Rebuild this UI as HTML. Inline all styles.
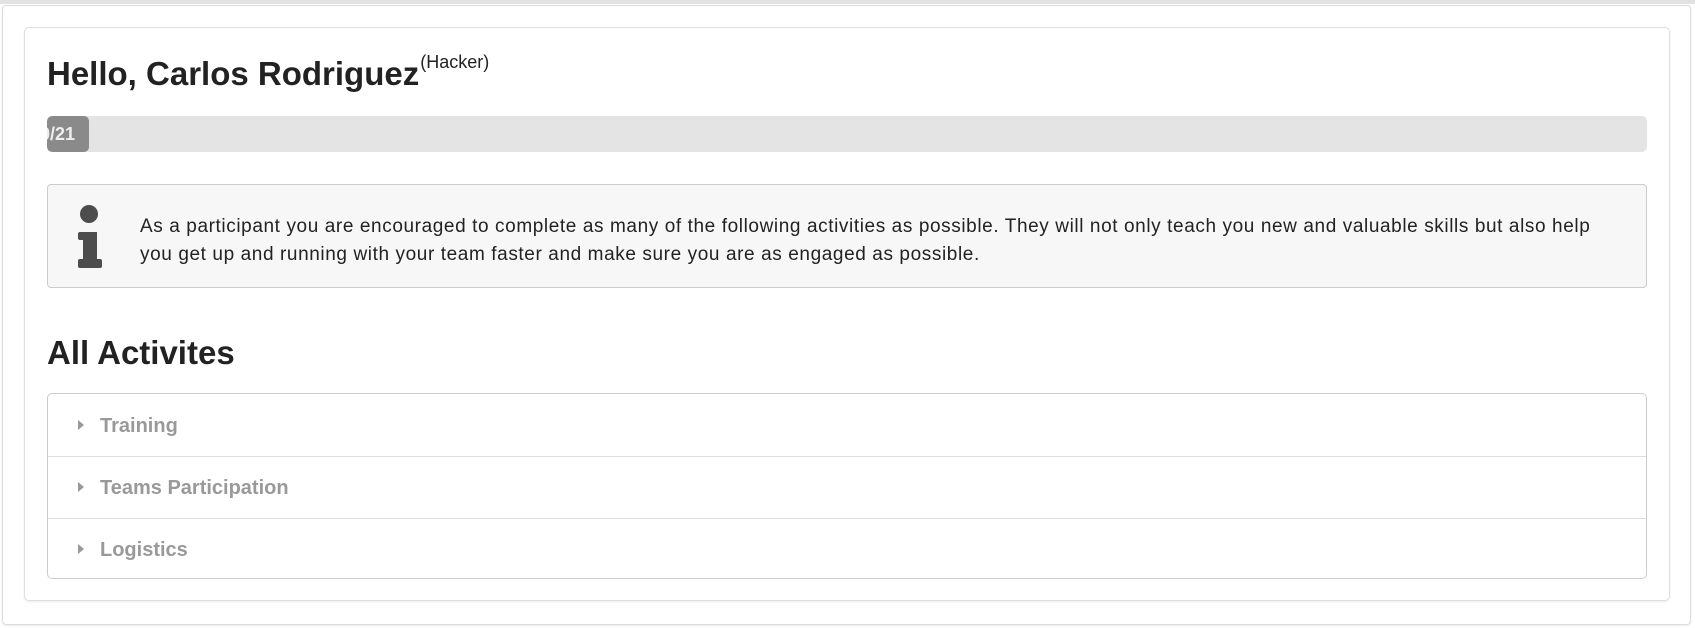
<!DOCTYPE html>
<html><head><meta charset="utf-8"><style>
html,body{margin:0;padding:0;width:1695px;height:628px;background:#fff;overflow:hidden;font-family:"Liberation Sans",sans-serif;position:relative}
.abs{position:absolute}
.topbar{left:0;top:0;width:1695px;height:4px;background:#e2e2e2}
.outer{left:2px;top:5px;width:1687px;height:618px;border:1px solid #dcdcdc;border-radius:4px;box-shadow:0 1px 2px rgba(0,0,0,.08)}
.inner{left:24px;top:27px;width:1644px;height:572px;border:1px solid #dedede;border-radius:5px;box-shadow:0 1px 2px rgba(0,0,0,.08)}
h1{margin:0;position:absolute;font-weight:bold;color:#222;font-size:33px;white-space:nowrap;line-height:1}
.sup{font-size:18px;font-weight:normal;position:relative;top:-17px;margin-left:1px}
.prog{left:47px;top:116px;width:1600px;height:36px;background:#e4e4e4;border-radius:5px;overflow:hidden}
.fill{left:0;top:0;width:42px;height:36px;background:#8a8a8a;border-radius:5px;overflow:hidden;color:#eee;font-weight:bold;font-size:18px;line-height:36px}
.fill span{position:absolute;left:-7px;top:0}
.info{left:47px;top:184px;width:1598px;height:102px;background:#f7f7f7;border:1px solid #ccc;border-radius:4px}
.txt{left:140px;top:213px;font-size:19px;color:#222;line-height:28px;white-space:nowrap;letter-spacing:0.6px}
.acc{left:47px;top:393px;width:1598px;height:184px;border:1px solid #ccc;border-radius:5px}
.row{left:0;width:1598px;height:1px;background:#ddd}
.it{left:52px;font-size:20px;font-weight:bold;color:#999;white-space:nowrap}
.arr{left:30px;width:0;height:0;border-top:5.5px solid transparent;border-bottom:5.5px solid transparent;border-left:6px solid #999}
</style></head><body>
<div class="abs topbar"></div>
<div class="abs outer"></div>
<div class="abs inner"></div>
<h1 style="left:47px;top:57px">Hello, Carlos Rodriguez<span class="sup">(Hacker)</span></h1>
<div class="abs prog"><div class="abs fill"><span>0/21</span></div></div>
<div class="abs info"></div>
<svg class="abs" style="left:70px;top:200px" width="40" height="72" viewBox="70 200 40 72">
<circle cx="89" cy="214" r="9" fill="#4d4d4d"/>
<path d="M80 232 H97 V259 H100 Q102 259 102 261 V266 Q102 268 100 268 H80 Q78 268 78 266 V261 Q78 259 80 259 H83 V240 H80 Q78 240 78 238 V234 Q78 232 80 232 Z" fill="#4d4d4d"/>
</svg>
<div class="abs txt">As a participant you are encouraged to complete as many of the following activities as possible. They will not only teach you new and valuable skills but also help<br>you get up and running with your team faster and make sure you are as engaged as possible.</div>
<h1 style="left:47px;top:336px">All Activites</h1>
<div class="abs acc">
<div class="abs row" style="top:62px"></div>
<div class="abs row" style="top:124px"></div>
<div class="abs arr" style="top:26px"></div><div class="abs it" style="top:21px">Training</div>
<div class="abs arr" style="top:88px"></div><div class="abs it" style="top:83px">Teams Participation</div>
<div class="abs arr" style="top:150px"></div><div class="abs it" style="top:145px">Logistics</div>
</div>
</body></html>
